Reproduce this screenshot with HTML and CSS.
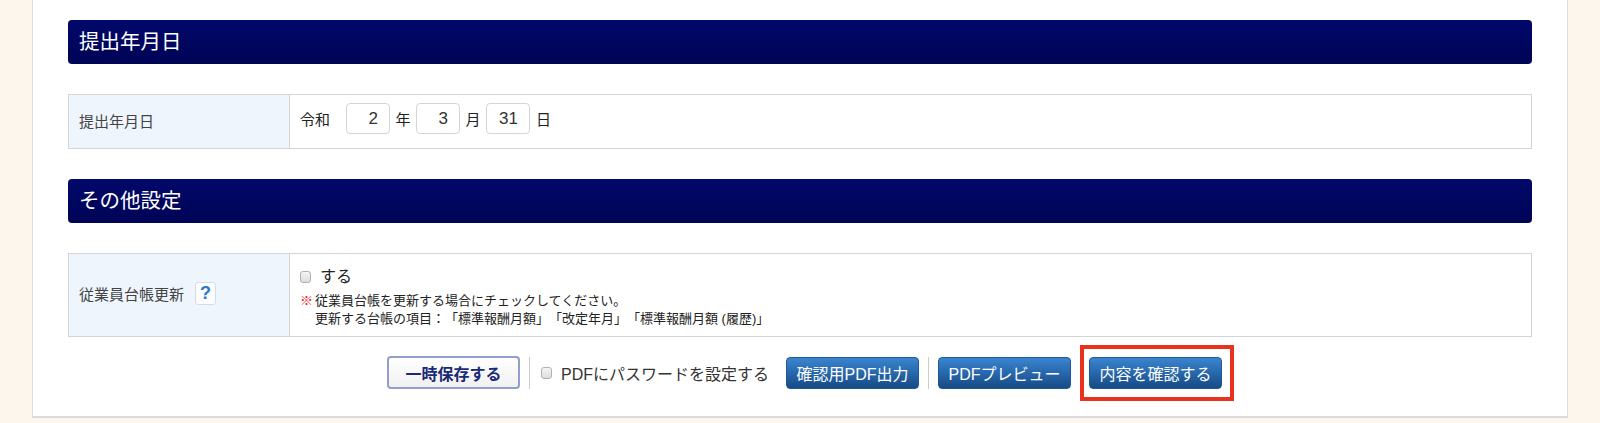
FILE: index.html
```html
<!DOCTYPE html>
<html lang="ja">
<head>
<meta charset="utf-8">
<title>提出年月日</title>
<link rel="stylesheet" href="styles.css">
</head>
<body>
<main class="panel">
  <h2 class="section-head">提出年月日</h2>
  <table class="form-table date-table">
    <tr>
      <th>提出年月日</th>
      <td>
        <div class="date-row">
          <span class="era">令和</span>
          <input class="date-input" type="text" value="2"><span class="unit">年</span>
          <input class="date-input" type="text" value="3"><span class="unit">月</span>
          <input class="date-input" type="text" value="31"><span class="unit">日</span>
        </div>
      </td>
    </tr>
  </table>
  <h2 class="section-head second">その他設定</h2>
  <table class="form-table other-table">
    <tr>
      <th><span class="th-inner">従業員台帳更新<span class="help">?</span></span></th>
      <td>
        <label class="check-line"><input class="check" type="checkbox">する</label>
        <p class="note"><span class="mark">※</span>従業員台帳を更新する場合にチェックしてください。<br>更新する台帳の項目：「標準報酬月額」「改定年月」「標準報酬月額 (履歴)」</p>
      </td>
    </tr>
  </table>
  <div class="actions">
    <button class="btn-save" type="button">一時保存する</button>
    <span class="sep first"></span>
    <label class="pdf-pass"><input class="check" type="checkbox">PDFにパスワードを設定する</label>
    <button class="btn" type="button">確認用PDF出力</button>
    <span class="sep"></span>
    <button class="btn" type="button">PDFプレビュー</button>
    <span class="confirm-wrap">
      <button class="btn" type="button">内容を確認する</button>
      <span class="highlight"></span>
    </span>
  </div>
</main>
</body>
</html>
```
FILE: styles.css
```css
* { box-sizing: border-box; }
html, body { margin: 0; padding: 0; }
body {
  height: 423px;
  overflow: hidden;
  background: #fdf6ec;
  color: #333;
  font-family: "Liberation Sans", "Noto Sans CJK JP", sans-serif;
}
.panel {
  margin: 0 32px;
  height: 418px;
  padding: 20px 35px 0 35px;
  background: #fff;
  border: 1px solid #dcdcdc;
  border-top: 0;
  border-bottom-width: 2px;
}
.section-head {
  margin: 0;
  height: 44px;
  padding-left: 11px;
  line-height: 43px;
  font-size: 20.5px;
  font-weight: 400;
  color: #fff;
  border-radius: 4px;
  background: linear-gradient(#00086a, #000455);
}
.section-head.second { margin-top: 30px; }
.form-table {
  width: 100%;
  margin-top: 30px;
  border-collapse: collapse;
  table-layout: fixed;
  font-size: 15px;
}
.form-table th, .form-table td {
  border: 1px solid #d5d5d5;
}
.form-table th {
  width: 221px;
  padding: 0 0 2px 10px;
  background: #eef5fd;
  font-weight: 400;
  text-align: left;
  color: #444;
  vertical-align: middle;
}
.date-table tr { height: 54px; }
.date-table td { padding: 0 0 6px 10px; vertical-align: middle; }
.other-table tr { height: 83px; }
.other-table th { padding-bottom: 4px; }
.other-table td { padding: 12px 0 0 10px; vertical-align: top; }
.date-row { display: flex; align-items: center; color: #222; }
.era { margin-right: 16px; }
.date-input {
  width: 44px;
  height: 31px;
  padding: 0 11px 0 0;
  border: 1px solid #d4d4d4;
  border-radius: 4px;
  background: #fff;
  color: #333;
  font: 17px "Liberation Sans", sans-serif;
  text-align: right;
}
.unit { width: 26px; text-align: center; }
.unit:last-child { text-align: left; margin-left: 6px; }
.th-inner { display: flex; align-items: center; }
.help {
  display: block;
  width: 21px;
  height: 23px;
  margin-left: 11px;
  border: 1px solid #d4dce6;
  border-radius: 3px;
  background: #fbfcfe;
  color: #2a78c8;
  font: bold 18px/21px "Liberation Sans", sans-serif;
  text-align: center;
}
.check {
  appearance: none;
  display: block;
  width: 11px;
  height: 12px;
  margin: 0;
  border: 1px solid #b0b0b0;
  border-radius: 3px;
  background: linear-gradient(#f4f4f4, #dedede);
}
.check-line {
  display: flex;
  align-items: center;
  gap: 9px;
  font-size: 16px;
  line-height: 22px;
  color: #222;
}
.note {
  margin: 4px 0 0;
  padding-left: 15px;
  font-size: 13px;
  line-height: 18px;
  color: #222;
  position: relative;
  text-spacing-trim: space-all;
}
.mark {
  position: absolute;
  left: 0;
  top: 0;
  color: #e8211c;
  font-weight: 700;
}
.actions {
  display: flex;
  align-items: center;
  margin-top: 19px;
  padding-left: 319px;
}
.btn-save {
  width: 133px;
  height: 33px;
  padding: 0;
  border: 2px solid #929fcc;
  border-radius: 4px;
  background: linear-gradient(#fff, #f0f0f0);
  color: #1a2a78;
  font: bold 16px "Liberation Sans", "Noto Sans CJK JP", sans-serif;
}
.sep {
  width: 1px;
  height: 32px;
  margin: 0 9px;
  background: #ccc;
}
.sep.first { margin-right: 11px; }
.pdf-pass {
  display: flex;
  align-items: center;
  gap: 9px;
  width: 245px;
  font-size: 16px;
  color: #333;
}
.btn {
  display: block;
  width: 133px;
  height: 32px;
  padding: 0;
  border: 1px solid #1d5a98;
  border-radius: 4px;
  background: linear-gradient(#3a85d0, #164a86);
  color: #fff;
  font: 16px "Liberation Sans", "Noto Sans CJK JP", sans-serif;
}
.confirm-wrap { position: relative; margin-left: 18px; }
.highlight {
  position: absolute;
  left: -9px;
  right: -12px;
  top: -12px;
  bottom: -12px;
  border: 4px solid #e8321c;
}
```
